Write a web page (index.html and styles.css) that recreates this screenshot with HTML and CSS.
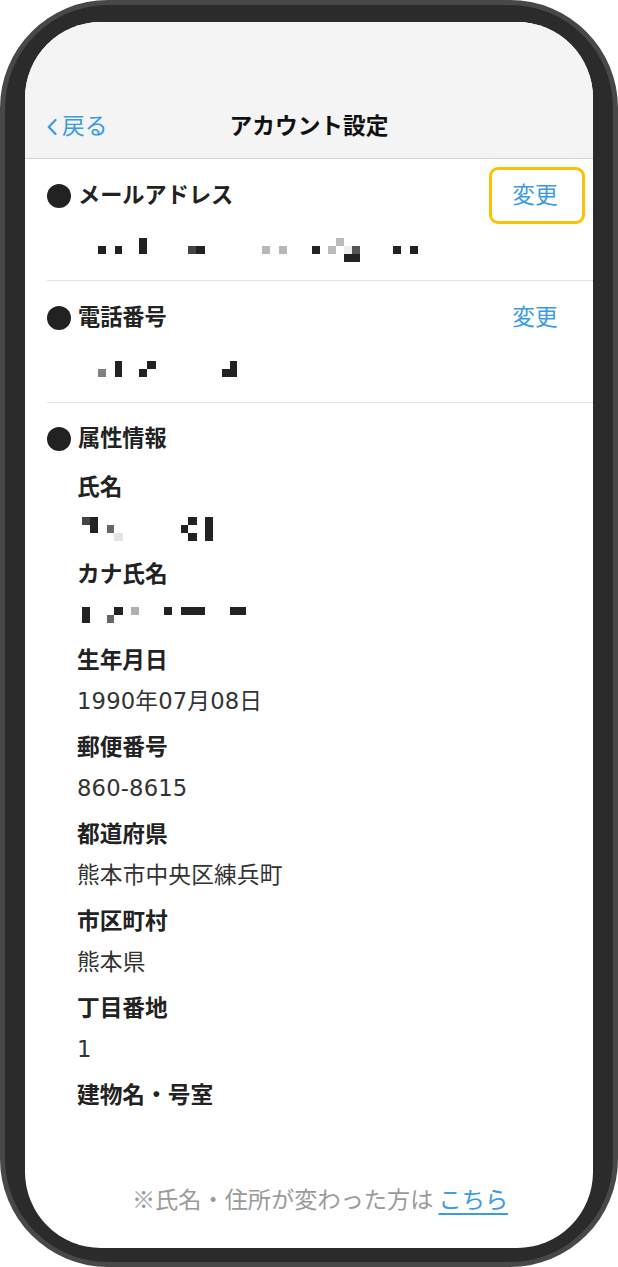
FILE: index.html
```html
<!DOCTYPE html>
<html lang="ja">
<head>
<meta charset="utf-8">
<title>アカウント設定</title>
<link rel="stylesheet" href="styles.css">
</head>
<body>
<div class="phone">
  <div class="bezel">
    <div class="screen">
      <header class="header">
        <nav class="nav">
          <a class="back">
            <svg class="chev" width="10" height="16" viewBox="0 0 10 16"><polyline points="8.5,1 1.8,8 8.5,15" fill="none" stroke="#3a9ae4" stroke-width="2.2" stroke-linecap="round" stroke-linejoin="round"/></svg>
            <span class="back-text">戻る</span>
          </a>
          <h1 class="title">アカウント設定</h1>
          <span></span>
        </nav>
      </header>

      <section class="section">
        <div class="head-row">
          <h2 class="head"><span class="dot"></span><span class="head-text">メールアドレス</span></h2>
          <a class="change focus">変更</a>
        </div>
        <svg class="redact" width="380" height="24" viewBox="0 0 380 24">
          <rect x="51" y="8" width="8" height="8" fill="#222"/>
          <rect x="68" y="8" width="7" height="8" fill="#222"/>
          <rect x="92" y="0" width="8" height="16" fill="#222"/>
          <rect x="141" y="8" width="8" height="8" fill="#444"/>
          <rect x="149" y="8" width="9" height="8" fill="#222"/>
          <rect x="215" y="8" width="8" height="8" fill="#b8b8b8"/>
          <rect x="232" y="8" width="8" height="8" fill="#b8b8b8"/>
          <rect x="265" y="8" width="8" height="8" fill="#222"/>
          <rect x="281" y="8" width="8" height="8" fill="#bbb"/>
          <rect x="289" y="0" width="8" height="8" fill="#bbb"/>
          <rect x="297" y="8" width="8" height="8" fill="#eee"/>
          <rect x="305" y="8" width="8" height="8" fill="#555"/>
          <rect x="297" y="16" width="16" height="8" fill="#222"/>
          <rect x="346" y="8" width="8" height="8" fill="#222"/>
          <rect x="363" y="8" width="8" height="8" fill="#222"/>
        </svg>
      </section>

      <section class="section">
        <div class="head-row">
          <h2 class="head"><span class="dot"></span><span class="head-text">電話番号</span></h2>
          <a class="change">変更</a>
        </div>
        <svg class="redact" width="200" height="24" viewBox="0 0 200 24">
          <rect x="51" y="9" width="8" height="8" fill="#808080"/>
          <rect x="68" y="1" width="7" height="16" fill="#222"/>
          <rect x="92" y="9" width="8" height="8" fill="#222"/>
          <rect x="100" y="1" width="9" height="8" fill="#222"/>
          <rect x="175" y="9" width="15" height="8" fill="#222"/>
          <rect x="183" y="1" width="7" height="8" fill="#222"/>
        </svg>
      </section>

      <section class="section section-attr">
        <div class="head-row">
          <h2 class="head"><span class="dot"></span><span class="head-text">属性情報</span></h2>
        </div>
        <dl class="attrs">
          <div class="item">
            <dt class="label">氏名</dt>
            <dd class="value-redact">
              <svg class="redact-item" width="140" height="49" viewBox="0 0 140 49">
                <rect x="5" y="10" width="8" height="8" fill="#444"/>
                <rect x="13" y="10" width="8" height="16" fill="#222"/>
                <rect x="30" y="18" width="7" height="8" fill="#666"/>
                <rect x="37" y="26" width="9" height="8" fill="#e5e5e5"/>
                <rect x="104" y="18" width="7" height="8" fill="#222"/>
                <rect x="111" y="10" width="9" height="8" fill="#222"/>
                <rect x="111" y="26" width="9" height="8" fill="#222"/>
                <rect x="128" y="10" width="8" height="24" fill="#222"/>
              </svg>
            </dd>
          </div>
          <div class="item">
            <dt class="label">カナ氏名</dt>
            <dd class="value-redact">
              <svg class="redact-item" width="180" height="48" viewBox="0 0 180 48">
                <rect x="5" y="13" width="8" height="16" fill="#222"/>
                <rect x="30" y="21" width="7" height="8" fill="#666"/>
                <rect x="37" y="13" width="9" height="8" fill="#222"/>
                <rect x="54" y="13" width="8" height="8" fill="#b0b0b0"/>
                <rect x="87" y="13" width="8" height="8" fill="#222"/>
                <rect x="104" y="13" width="24" height="8" fill="#222"/>
                <rect x="153" y="13" width="16" height="8" fill="#222"/>
              </svg>
            </dd>
          </div>
          <div class="item text-item">
            <dt class="label">生年月日</dt>
            <dd class="value">1990年07月08日</dd>
          </div>
          <div class="item text-item">
            <dt class="label">郵便番号</dt>
            <dd class="value">860-8615</dd>
          </div>
          <div class="item text-item">
            <dt class="label">都道府県</dt>
            <dd class="value">熊本市中央区練兵町</dd>
          </div>
          <div class="item text-item">
            <dt class="label">市区町村</dt>
            <dd class="value">熊本県</dd>
          </div>
          <div class="item text-item">
            <dt class="label">丁目番地</dt>
            <dd class="value">1</dd>
          </div>
          <div class="item text-item">
            <dt class="label">建物名・号室</dt>
            <dd class="value"></dd>
          </div>
        </dl>
      </section>

      <footer class="footer">
        <p class="note">※氏名・住所が変わった方は <a class="link">こちら</a></p>
      </footer>
    </div>
  </div>
</div>
</body>
</html>
```

FILE: styles.css
```css
html, body {
  margin: 0;
  padding: 0;
  background: #ffffff;
}
body {
  width: 618px;
  height: 1267px;
  overflow: hidden;
  font-family: "Noto Sans CJK JP", "Noto Sans", sans-serif;
  color: #222;
}
.phone {
  box-sizing: border-box;
  width: 618px;
  height: 1267px;
  padding: 5px;
  background: #484848;
  border-radius: 108px;
}
.bezel {
  box-sizing: border-box;
  height: 100%;
  padding: 17px 20px 14px 20px;
  background: #2b2b2b;
  border-radius: 103px;
}
.screen {
  box-sizing: border-box;
  height: 100%;
  background: #ffffff;
  border-radius: 76px;
  overflow: hidden;
  display: flex;
  flex-direction: column;
}
.header {
  box-sizing: border-box;
  height: 137px;
  padding: 82px 0 8px 0;
  background: #f4f4f4;
  border-bottom: 1px solid #d2d2d2;
}
.nav {
  height: 46px;
  display: grid;
  grid-template-columns: 1fr auto 1fr;
  align-items: center;
}
.back {
  display: flex;
  align-items: center;
  gap: 5px;
  padding-left: 22px;
  color: #3a9ae4;
  font-size: 22.7px;
}
.back-text {
  line-height: 42px;
  padding-bottom: 4px;
}
.chev {
  display: block;
}
.title {
  margin: 0;
  font-size: 22.7px;
  font-weight: 700;
  color: #111;
  line-height: 42px;
  padding-bottom: 4px;
}
.section {
  margin-left: 22px;
  padding: 8px 0 18px 0;
  border-bottom: 1px solid #e2e2e2;
}
.section-attr {
  border-bottom: none;
  padding: 7px 0 0 0;
}
.head-row {
  height: 57px;
  display: flex;
  align-items: center;
  justify-content: space-between;
}
.head {
  margin: 0;
  display: flex;
  align-items: center;
  gap: 7px;
  font-size: 22.2px;
  font-weight: 700;
  color: #222;
}
.head-text {
  line-height: 30px;
  padding-bottom: 5px;
}
.dot {
  width: 24px;
  height: 24px;
  border-radius: 50%;
  background: #222;
}
.change {
  box-sizing: border-box;
  width: 96px;
  height: 57px;
  margin-right: 8px;
  display: flex;
  align-items: center;
  justify-content: center;
  padding: 0 4px 5px 0;
  border: 3px solid transparent;
  border-radius: 9px;
  color: #3a9ae4;
  font-size: 22.7px;
}
.change.focus {
  border-color: #fcc100;
}
.redact {
  display: block;
  margin-top: 14px;
}
.attrs {
  margin: 2px 0 0 0;
  padding-left: 30px;
}
.item {
  margin: 0;
}
.text-item {
  margin-bottom: 9px;
}
.label {
  margin: 0;
  font-size: 22.7px;
  font-weight: 700;
  line-height: 34px;
  padding-bottom: 4px;
  color: #222;
}
.value {
  margin: 0;
  min-height: 38px;
  padding-top: 2px;
  font-family: "DejaVu Sans", "Noto Sans CJK JP", sans-serif;
  font-size: 22.7px;
  letter-spacing: 0.15px;
  line-height: 38px;
  color: #333;
}
.value-redact {
  margin: 0;
}
.redact-item {
  display: block;
}
.footer {
  margin-top: auto;
  padding: 0 0 31px 22px;
}
.note {
  margin: 0;
  text-align: center;
  font-size: 23.2px;
  line-height: 38px;
  color: #9a9a9a;
}
.link {
  color: #3a9ae4;
  text-decoration: underline;
  text-underline-offset: 5px;
  text-decoration-thickness: 2px;
}
```
